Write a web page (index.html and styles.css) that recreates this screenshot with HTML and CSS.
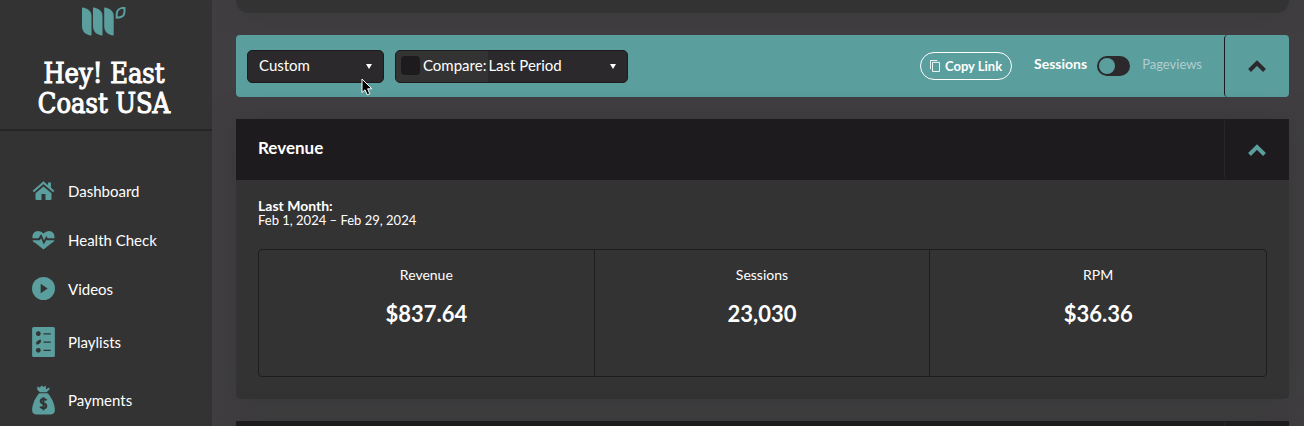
FILE: index.html
```
<!DOCTYPE html>
<html lang="en">
<head>
<meta charset="utf-8">
<title>Dashboard</title>
<link rel="stylesheet" href="styles.css">
</head>
<body>
<div class="app">
  <aside class="sidebar">
    <header class="brand">
      <svg class="logo" viewBox="0 0 44 30" aria-hidden="true">
        <path d="M0 .5C6 1 9.500 4.500 9.500 9V28.500C3.500 28 0 24.500 0 19ZM11 .5C17 1 20.500 4.500 20.500 9V28.500C14.500 28 11 24.500 11 19ZM22.200 .5C28.200 1 31.700 4.500 31.700 9V28.500C25.700 28 22.200 24.500 22.200 19Z"/>
        <path class="leaf" d="M42.500 .8C37.500 .8 34.700 3.500 34.700 7V10.700C40 10.700 42.500 8 42.500 4.500Z"/>
      </svg>
      <h1 class="site-name">Hey! East Coast USA</h1>
    </header>
    <nav class="menu">
      <a class="menu-item" href="#dashboard">
        <svg class="icon" viewBox="0 0 22 20" aria-hidden="true"><path d="M11 5.500 19 12.300V18Q19 19 18 19H13V13H9V19H4Q3 19 3 18V12.300Z"/><path class="line" d="M.8 10.600 11 1.700 21.200 10.600"/><path d="M15.500 1.500H18.500V8L15.500 5.500Z"/></svg>
        Dashboard</a>
      <a class="menu-item" href="#health">
        <svg class="icon" viewBox="0 0 22 20" aria-hidden="true"><path d="M0 8.300C-.5 4 2 1 5.500 1Q9 1 11 3.500Q13 1 16.500 1C20 1 22.500 4 22 8.300H15.200L13.800 6 11.500 10.500 8.700 4 6 8.300ZM0 10.300H7.200L8.600 8.300 11.300 14.500 14 9.700 14.400 10.300H22C22 11.500 20 12.500 18.500 13.500L11 19.500 3.500 13.500C2 12.500 0 11.500 0 10.300Z"/></svg>
        Health Check</a>
      <a class="menu-item" href="#videos">
        <svg class="icon round" viewBox="0 0 22 22" aria-hidden="true"><circle cx="11" cy="11" r="11"/><path class="hole" d="M8.300 6.500 15 11 8.300 15.500Z"/></svg>
        Videos</a>
      <a class="menu-item tall" href="#playlists">
        <svg class="icon high" viewBox="0 0 22 29" aria-hidden="true"><rect width="22" height="29" rx="1.500"/><g class="hole"><circle cx="6" cy="6.500" r="2.300"/><path d="M4 17V14.500L6.500 12.500 8.500 12.200V14.500L6.500 16.700Z"/><circle cx="6" cy="22.500" r="2.300"/><path d="M11 6H18V7.200H11ZM11 14H18V15.200H11ZM11 22H18V23.200H11Z"/></g></svg>
        Playlists</a>
      <a class="menu-item tall" href="#payments">
        <svg class="icon high" viewBox="0 0 22 29" aria-hidden="true"><path d="M7.500 7 5 4.500V1.500L7.500 2.500 9.200 .5 11 2 13 .5 13.500 4 16.500 2.500 17 4 14 7Z"/><path d="M7 8H15C18 11 22 18 22 24Q22 28.500 18 28.500H4Q0 28.500 0 24C0 18 4 11 7 8Z"/><path class="dollar" d="M14 14.800Q12.800 13.500 11 13.500C7.500 13.500 7.400 17.200 11 18C14.600 18.800 14.500 22.500 11 22.500Q9 22.500 7.800 21M11 11.800V24.300"/></svg>
        Payments</a>
    </nav>
  </aside>

  <main class="content">
    <section class="panel-end"></section>

    <form class="toolbar">
      <div class="filters">
        <div class="field period">
          <select class="select" aria-label="Date range"><option>Custom</option></select>
        </div>
        <div class="field compare">
          <label class="compare-label"><input class="tick" type="checkbox">Compare:</label>
          <select class="select" aria-label="Compare with"><option>Last Period</option></select>
        </div>
      </div>
      <div class="actions">
        <button class="copy" type="button">
          <svg class="copy-icon" viewBox="0 0 11 13" aria-hidden="true"><path d="M.5 10V.5H8M2.800 2.500H10.500V12.500H2.800Z"/></svg>
          Copy Link</button>
        <label class="metric" for="metric"><strong>Sessions</strong></label>
        <input class="switch" id="metric" type="checkbox" role="switch">
        <label class="metric muted" for="metric">Pageviews</label>
      </div>
      <button class="collapse dark" type="button" aria-label="Collapse filters">
        <svg class="chevron" viewBox="0 0 18 12" aria-hidden="true"><path d="M1.500 10.500 9 3 16.500 10.500"/></svg>
      </button>
    </form>

    <section class="card">
      <header class="card-head">
        <h2 class="card-title">Revenue</h2>
        <button class="collapse" type="button" aria-label="Collapse revenue">
          <svg class="chevron" viewBox="0 0 18 12" aria-hidden="true"><path d="M1.500 10.500 9 3 16.500 10.500"/></svg>
        </button>
      </header>
      <div class="card-body">
        <p class="range"><strong>Last Month:</strong><br>Feb 1, 2024 – Feb 29, 2024</p>
        <dl class="stats">
          <div class="stat"><dt>Revenue</dt><dd>$837.64</dd></div>
          <div class="stat"><dt>Sessions</dt><dd>23,030</dd></div>
          <div class="stat"><dt>RPM</dt><dd>$36.36</dd></div>
        </dl>
      </div>
    </section>

    <section class="card">
      <header class="card-head">
        <button class="collapse" type="button" aria-label="Expand next section"></button>
      </header>
    </section>
  </main>
</div>
<svg class="pointer" viewBox="0 0 12 18" aria-hidden="true"><path d="M1 1V14.500L4 11.800 6.300 16.800 8.800 15.700 6.600 10.800H10.800Z"/></svg>
</body>
</html>
```
FILE: styles.css
```
* { box-sizing: border-box; }

body {
  margin: 0;
  overflow: hidden;
  background: #403e41;
  color: #fff;
  font: 15px/20px Lato, "Open Sans", sans-serif;
}

button, input, select { font: inherit; color: inherit; margin: 0; }

.app { display: flex; height: 100vh; overflow: hidden; }

.sidebar { flex: 0 0 212px; background: #333; }

.brand {
  padding: 7px 28px 10px 24px;
  border-bottom: 2px solid #262626;
  text-align: center;
}
.logo { display: block; width: 44px; height: 30px; margin: 0 auto; fill: #5a9e9d; }
.leaf { fill: none; stroke: #5a9e9d; stroke-width: 2; }
.site-name {
  margin: 22px 0 0;
  font: 500 27px/30px "Roboto Slab", "DejaVu Serif Condensed", "DejaVu Serif", serif;
  -webkit-text-stroke: 1px #fff;
}

.menu { display: flex; flex-direction: column; padding: 35px 32px 0; }
.menu-item {
  display: flex;
  align-items: center;
  gap: 13px;
  height: 49px;
  color: #fff;
  font-size: 15px;
  text-decoration: none;
}
.menu-item.tall { height: 58px; }
.icon { width: 23px; height: 20px; fill: #5a9e9d; }
.icon.round { height: 23px; }
.icon.high { height: 30px; }
.icon .line { fill: none; stroke: #5a9e9d; stroke-width: 2; }
.icon .hole { fill: #333; }
.icon .dollar { fill: none; stroke: #333; stroke-width: 2; }

.content {
  flex: 1;
  display: flex;
  flex-direction: column;
  min-width: 0;
  padding: 0 15px 0 24px;
}

.panel-end {
  flex: 0 0 13px;
  margin-bottom: 22px;
  border-radius: 0 0 20px 20px;
  background: #333;
  box-shadow: 0 0 20px #383838;
}

.toolbar {
  display: flex;
  flex: 0 0 62px;
  margin-bottom: 22px;
  border-radius: 4px;
  background: #5a9e9d;
}
.filters { display: flex; align-items: center; gap: 11px; padding-left: 11px; }
.field {
  position: relative;
  display: flex;
  align-items: center;
  height: 33px;
  border: 1px solid #1d1b1e;
  border-radius: 5px;
  background: #2b292c;
}
.field::after {
  content: "";
  position: absolute;
  right: 11px;
  border: 3px solid transparent;
  border-top: 5px solid #fff;
  border-bottom: 0;
  pointer-events: none;
}
.period { width: 137px; }
.compare { width: 233px; }
.select {
  flex: 1;
  height: 31px;
  padding: 0 0 2px 11px;
  border: 0;
  border-radius: 4px;
  background: transparent;
  appearance: none;
}
.compare .select { padding-left: 0; }
.compare-label {
  display: flex;
  align-items: center;
  gap: 3px;
  height: 31px;
  padding: 0 2px 2px 5px;
  border-radius: 4px 0 0 4px;
  background: #333;
}
.tick {
  appearance: none;
  width: 19px;
  height: 19px;
  border-radius: 4px;
  background: #1d1b1e;
}

.actions { display: flex; align-items: center; margin-left: auto; padding-right: 22px; }
.copy {
  display: flex;
  align-items: center;
  justify-content: center;
  gap: 5px;
  width: 92px;
  height: 28px;
  margin-right: 22px;
  padding: 0;
  border: 1px solid #fff;
  border-radius: 14px;
  background: transparent;
  font-size: 13px;
  font-weight: 700;
}
.copy-icon { width: 10px; height: 12px; fill: none; stroke: #fff; }
.metric { padding-bottom: 5px; font-size: 13px; }
.metric strong { font-size: 14px; }
.muted { color: #b4cdd0; }
.switch {
  appearance: none;
  display: flex;
  align-items: center;
  width: 33px;
  height: 20px;
  margin: 0 12px 0 10px;
  padding: 2px;
  border-radius: 10px;
  background: #2b292c;
}
.switch::before { content: ""; width: 16px; height: 16px; border-radius: 50%; background: #5a9e9d; }

.collapse {
  flex: 0 0 65px;
  display: flex;
  align-items: center;
  justify-content: center;
  margin-left: auto;
  padding: 0;
  border: 0;
  border-left: 1px solid #29272a;
  border-radius: 4px;
  background: transparent;
  color: #5a9e9d;
}
.toolbar .collapse { margin-left: 0; }
.collapse.dark { border-color: #1d1b1e; color: #2b292c; }
.chevron { width: 18px; height: 12px; fill: none; stroke: currentColor; stroke-width: 4; }

.card {
  flex: none;
  margin-bottom: 22px;
  border-radius: 0 0 5px 5px;
  background: #333;
  box-shadow: 0 0 24px #383838;
}
.card-head { display: flex; height: 61px; background: #1d1b1e; }
.card-title { margin: 0; padding: 19px 22px; font-size: 17px; line-height: 20px; }
.card-body { padding: 19px 22px 22px; }
.range { margin: 0; font-size: 13px; line-height: 14px; }
.range strong { font-size: 14px; }
.stats {
  display: grid;
  grid-template-columns: repeat(3, 1fr);
  margin: 22px 0 0;
  border: 1px solid #1d1d1d;
  border-radius: 4px;
}
.stat { padding: 15px 10px 48px; text-align: center; }
.stat:not(:last-child) { border-right: 1px solid #1d1d1d; }
.stat dt { font-size: 14px; line-height: 20px; }
.stat dd { margin: 15px 0 0; font-size: 22px; font-weight: 700; line-height: 28px; }

.pointer {
  position: absolute;
  left: 361px;
  top: 78px;
  width: 12px;
  height: 18px;
  fill: #000;
  stroke: #fff;
}
```
